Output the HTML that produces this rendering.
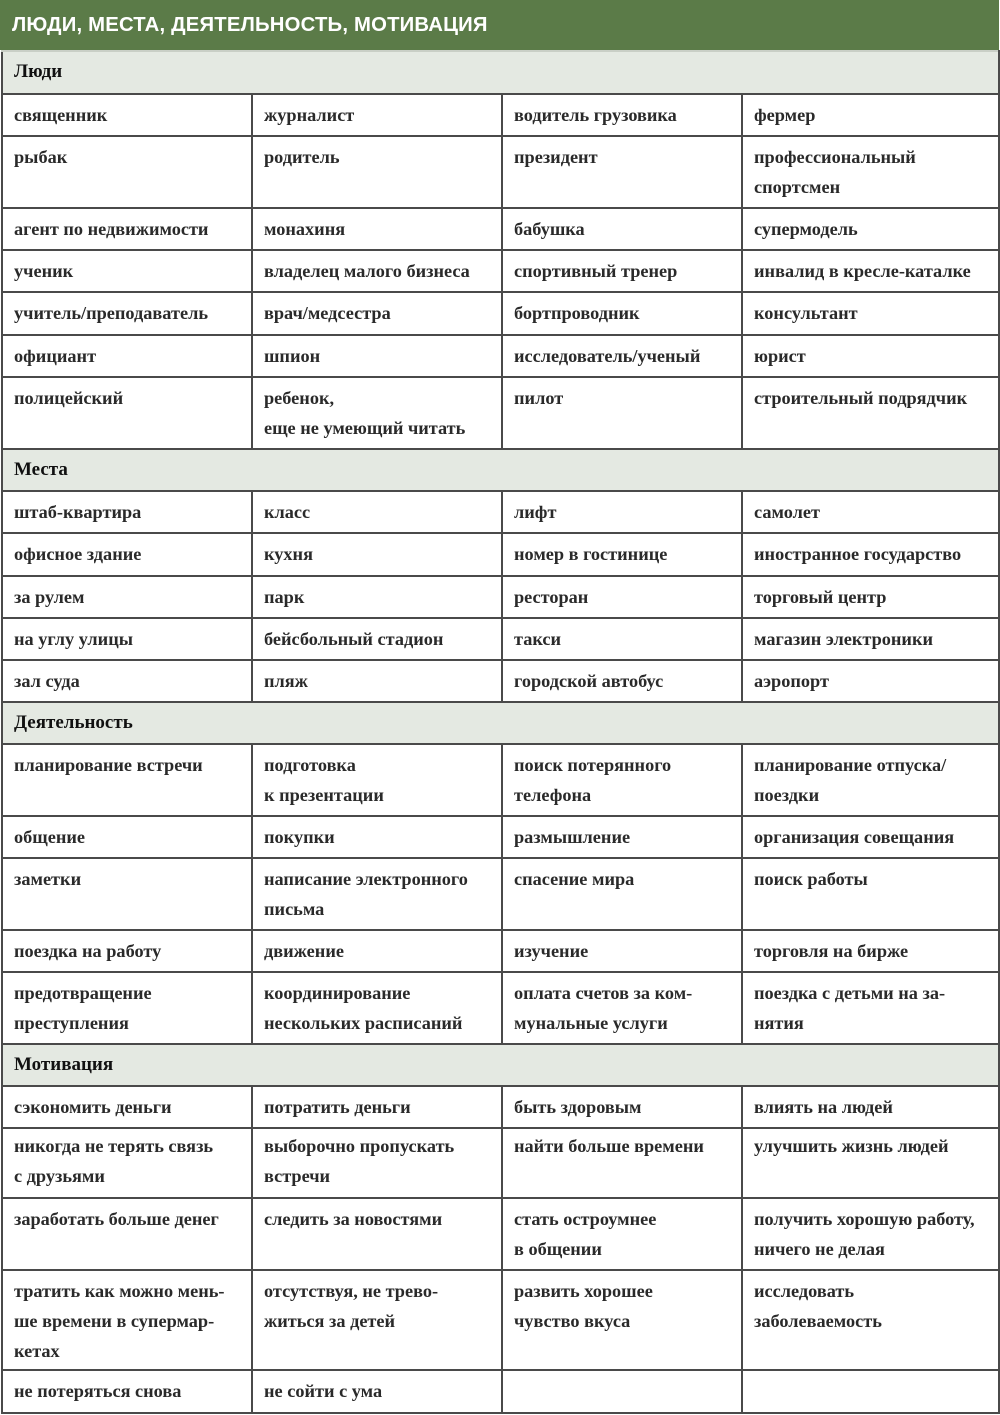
<!DOCTYPE html>
<html><head><meta charset="utf-8"><style>
html,body{margin:0;padding:0;background:#fff;width:1000px;height:1415px;overflow:hidden}
.hd{position:absolute;left:0;top:0;width:999px;height:50px;background:#5b7b48;color:#fff;font:bold 20.3px "Liberation Sans",sans-serif;line-height:50px;padding-left:12px;box-sizing:border-box;letter-spacing:0.2px}
table{position:absolute;left:1px;top:50px;width:997px;border-collapse:collapse;table-layout:fixed;font:bold 18.3px "Liberation Serif","Noto Serif CJK SC",serif;color:#2a2a2a}
td{border:2px solid #4a4a4a;vertical-align:top;padding:5px 0 0 11px;line-height:30px;box-sizing:border-box;overflow:hidden;white-space:nowrap}
tr.s td{background:#e4e9e2;border-top-color:#c9cfc6;font-size:19px;color:#111}
</style></head><body>
<div class="hd">ЛЮДИ, МЕСТА, ДЕЯТЕЛЬНОСТЬ, МОТИВАЦИЯ</div>
<table>
<colgroup><col style="width:250px"><col style="width:250px"><col style="width:240px"><col style="width:257px"></colgroup>
<tr class="s" style="height:43px"><td colspan="4">Люди</td></tr>
<tr style="height:42px"><td>священник</td><td>журналист</td><td>водитель грузовика</td><td>фермер</td></tr>
<tr style="height:72px"><td>рыбак</td><td>родитель</td><td>президент</td><td>профессиональный<br>спортсмен</td></tr>
<tr style="height:42px"><td>агент по недвижимости</td><td>монахиня</td><td>бабушка</td><td>супермодель</td></tr>
<tr style="height:42px"><td>ученик</td><td>владелец малого бизнеса</td><td>спортивный тренер</td><td>инвалид в кресле-каталке</td></tr>
<tr style="height:43px"><td>учитель/преподаватель</td><td>врач/медсестра</td><td>бортпроводник</td><td>консультант</td></tr>
<tr style="height:42px"><td>официант</td><td>шпион</td><td>исследователь/ученый</td><td>юрист</td></tr>
<tr style="height:72px"><td>полицейский</td><td>ребенок,<br>еще не умеющий читать</td><td>пилот</td><td>строительный подрядчик</td></tr>
<tr class="s" style="height:42px"><td colspan="4">Места</td></tr>
<tr style="height:42px"><td>штаб-квартира</td><td>класс</td><td>лифт</td><td>самолет</td></tr>
<tr style="height:43px"><td>офисное здание</td><td>кухня</td><td>номер в гостинице</td><td>иностранное государство</td></tr>
<tr style="height:42px"><td>за рулем</td><td>парк</td><td>ресторан</td><td>торговый центр</td></tr>
<tr style="height:42px"><td>на углу улицы</td><td>бейсбольный стадион</td><td>такси</td><td>магазин электроники</td></tr>
<tr style="height:42px"><td>зал суда</td><td>пляж</td><td>городской автобус</td><td>аэропорт</td></tr>
<tr class="s" style="height:42px"><td colspan="4">Деятельность</td></tr>
<tr style="height:72px"><td>планирование встречи</td><td>подготовка<br>к презентации</td><td>поиск потерянного<br>телефона</td><td>планирование отпуска/<br>поездки</td></tr>
<tr style="height:42px"><td>общение</td><td>покупки</td><td>размышление</td><td>организация совещания</td></tr>
<tr style="height:72px"><td>заметки</td><td>написание электронного<br>письма</td><td>спасение мира</td><td>поиск работы</td></tr>
<tr style="height:42px"><td>поездка на работу</td><td>движение</td><td>изучение</td><td>торговля на бирже</td></tr>
<tr style="height:72px"><td>предотвращение<br>преступления</td><td>координирование<br>нескольких расписаний</td><td>оплата счетов за ком-<br>мунальные услуги</td><td>поездка с детьми на за-<br>нятия</td></tr>
<tr class="s" style="height:42px"><td colspan="4">Мотивация</td></tr>
<tr style="height:42px"><td>сэкономить деньги</td><td>потратить деньги</td><td>быть здоровым</td><td>влиять на людей</td></tr>
<tr style="height:70px"><td style="padding-top:2px">никогда не терять связь<br>с друзьями</td><td style="padding-top:2px">выборочно пропускать<br>встречи</td><td style="padding-top:2px">найти больше времени</td><td style="padding-top:2px">улучшить жизнь людей</td></tr>
<tr style="height:72px"><td>заработать больше денег</td><td>следить за новостями</td><td>стать остроумнее<br>в общении</td><td>получить хорошую работу,<br>ничего не делая</td></tr>
<tr style="height:100px"><td>тратить как можно мень-<br>ше времени в супермар-<br>кетах</td><td>отсутствуя, не трево-<br>житься за детей</td><td>развить хорошее<br>чувство вкуса</td><td>исследовать<br>заболеваемость</td></tr>
<tr style="height:43px"><td>не потеряться снова</td><td>не сойти с ума</td><td></td><td></td></tr>
</table>
</body></html>
